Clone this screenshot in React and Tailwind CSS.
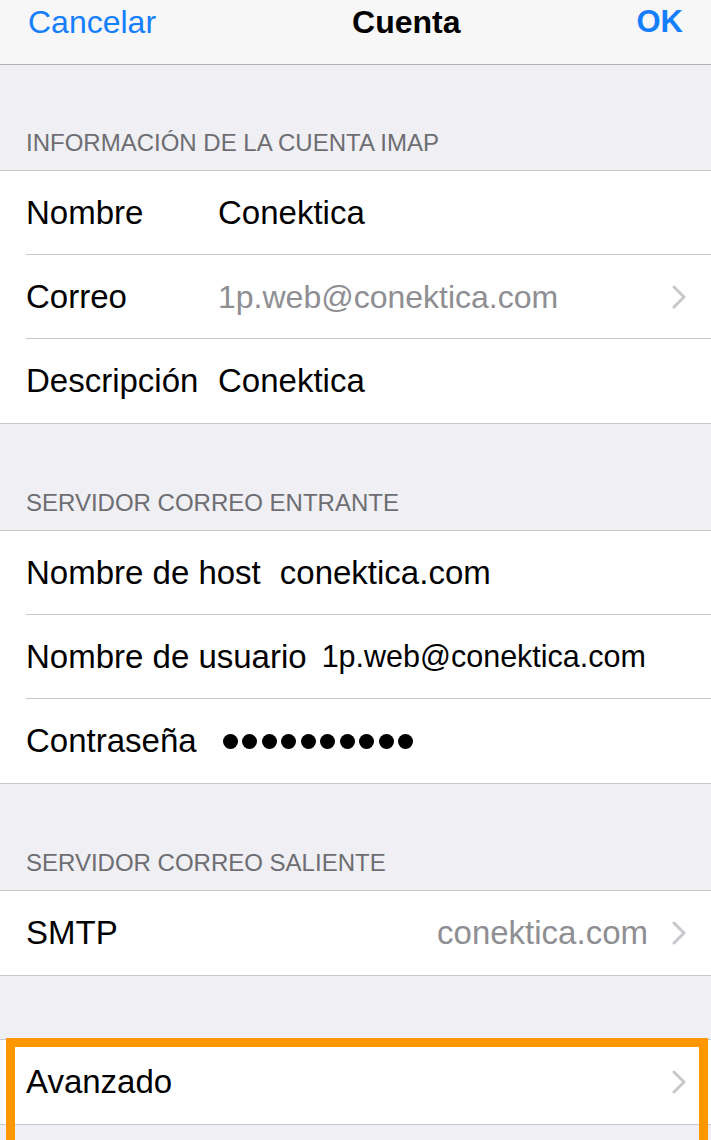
import React from "react";

function Chevron() {
  return (
    <svg width="14" height="24" viewBox="0 0 14 24" className="shrink-0">
      <polyline points="2,2 12,12 2,22" fill="none" stroke="#c7c7cc" strokeWidth="3" strokeLinecap="round" strokeLinejoin="round" />
    </svg>
  );
}

function SectionHeader({ title, h }) {
  return (
    <div className={`${h} flex items-end px-[26px] pb-[15px] text-[24px] leading-none text-[#6d6d72]`}>{title}</div>
  );
}

function Row({ label, value, labelW, valueCls, gray, chevron, last, right, children }) {
  return (
    <div className="pl-[26px]">
      <div className={`h-[84px] flex items-center pr-[25px] ${last ? "" : "border-b border-[#c8c7cc]"}`}>
        <span className={`${labelW || ""} shrink-0 text-black`}>{label}</span>
        {children}
        {value && (
          <span className={`${right ? "ml-auto" : ""} ${valueCls || ""} ${gray ? "text-[#8e8e93]" : "text-black"}`}>{value}</span>
        )}
        {chevron && <span className={`${right ? "ml-[24px]" : "ml-auto"} flex`}><Chevron /></span>}
      </div>
    </div>
  );
}

export default function App() {
  const dots = Array.from({ length: 10 });
  return (
    <div className="w-[711px] h-[1140px] overflow-hidden bg-[#efeff4] relative text-[33px]" style={{ fontFamily: '"Liberation Sans", Arial, sans-serif' }}>
      <div className="h-[65px] bg-[#f7f7f8] border-b border-[#b2b2b2] flex items-start justify-between px-[28px] pt-[6px] text-[32px] leading-none">
        <span className="text-[#157efb]">Cancelar</span>
        <span className="font-bold text-black ml-[20px]">Cuenta</span>
        <span className="font-bold text-[#157efb] text-[31px]">OK</span>
      </div>

      <SectionHeader title="INFORMACIÓN DE LA CUENTA IMAP" h="h-[105px]" />
      <div className="bg-white border-y border-[#c8c7cc]">
        <Row label="Nombre" labelW="w-[192px]" value="Conektica" />
        <Row label="Correo" labelW="w-[192px]" value="1p.web@conektica.com" valueCls="text-[32px]" gray chevron />
        <Row label="Descripción" labelW="w-[192px]" value="Conektica" last />
      </div>

      <SectionHeader title="SERVIDOR CORREO ENTRANTE" h="h-[106px]" />
      <div className="bg-white border-y border-[#c8c7cc]">
        <Row label="Nombre de host" labelW="mr-[19px]" value="conektica.com" />
        <Row label="Nombre de usuario" labelW="mr-[15px]" value="1p.web@conektica.com" valueCls="text-[30.5px]" />
        <Row label="Contraseña" labelW="mr-[26px]" last>
          <span className="flex gap-[4.5px]">
            {dots.map((_, i) => (
              <span key={i} className="w-[15px] h-[15px] rounded-full bg-black" />
            ))}
          </span>
        </Row>
      </div>

      <SectionHeader title="SERVIDOR CORREO SALIENTE" h="h-[106px]" />
      <div className="bg-white border-y border-[#c8c7cc]">
        <Row label="SMTP" value="conektica.com" gray chevron right last />
      </div>

      <div className="h-[63px]" />
      <div className="bg-white border-y border-[#c8c7cc]">
        <Row label="Avanzado" chevron last />
      </div>

      <div className="absolute left-[6px] right-[3px] top-[1038px] h-[120px] border-[9px] border-[#ff9800] pointer-events-none" />
    </div>
  );
}
